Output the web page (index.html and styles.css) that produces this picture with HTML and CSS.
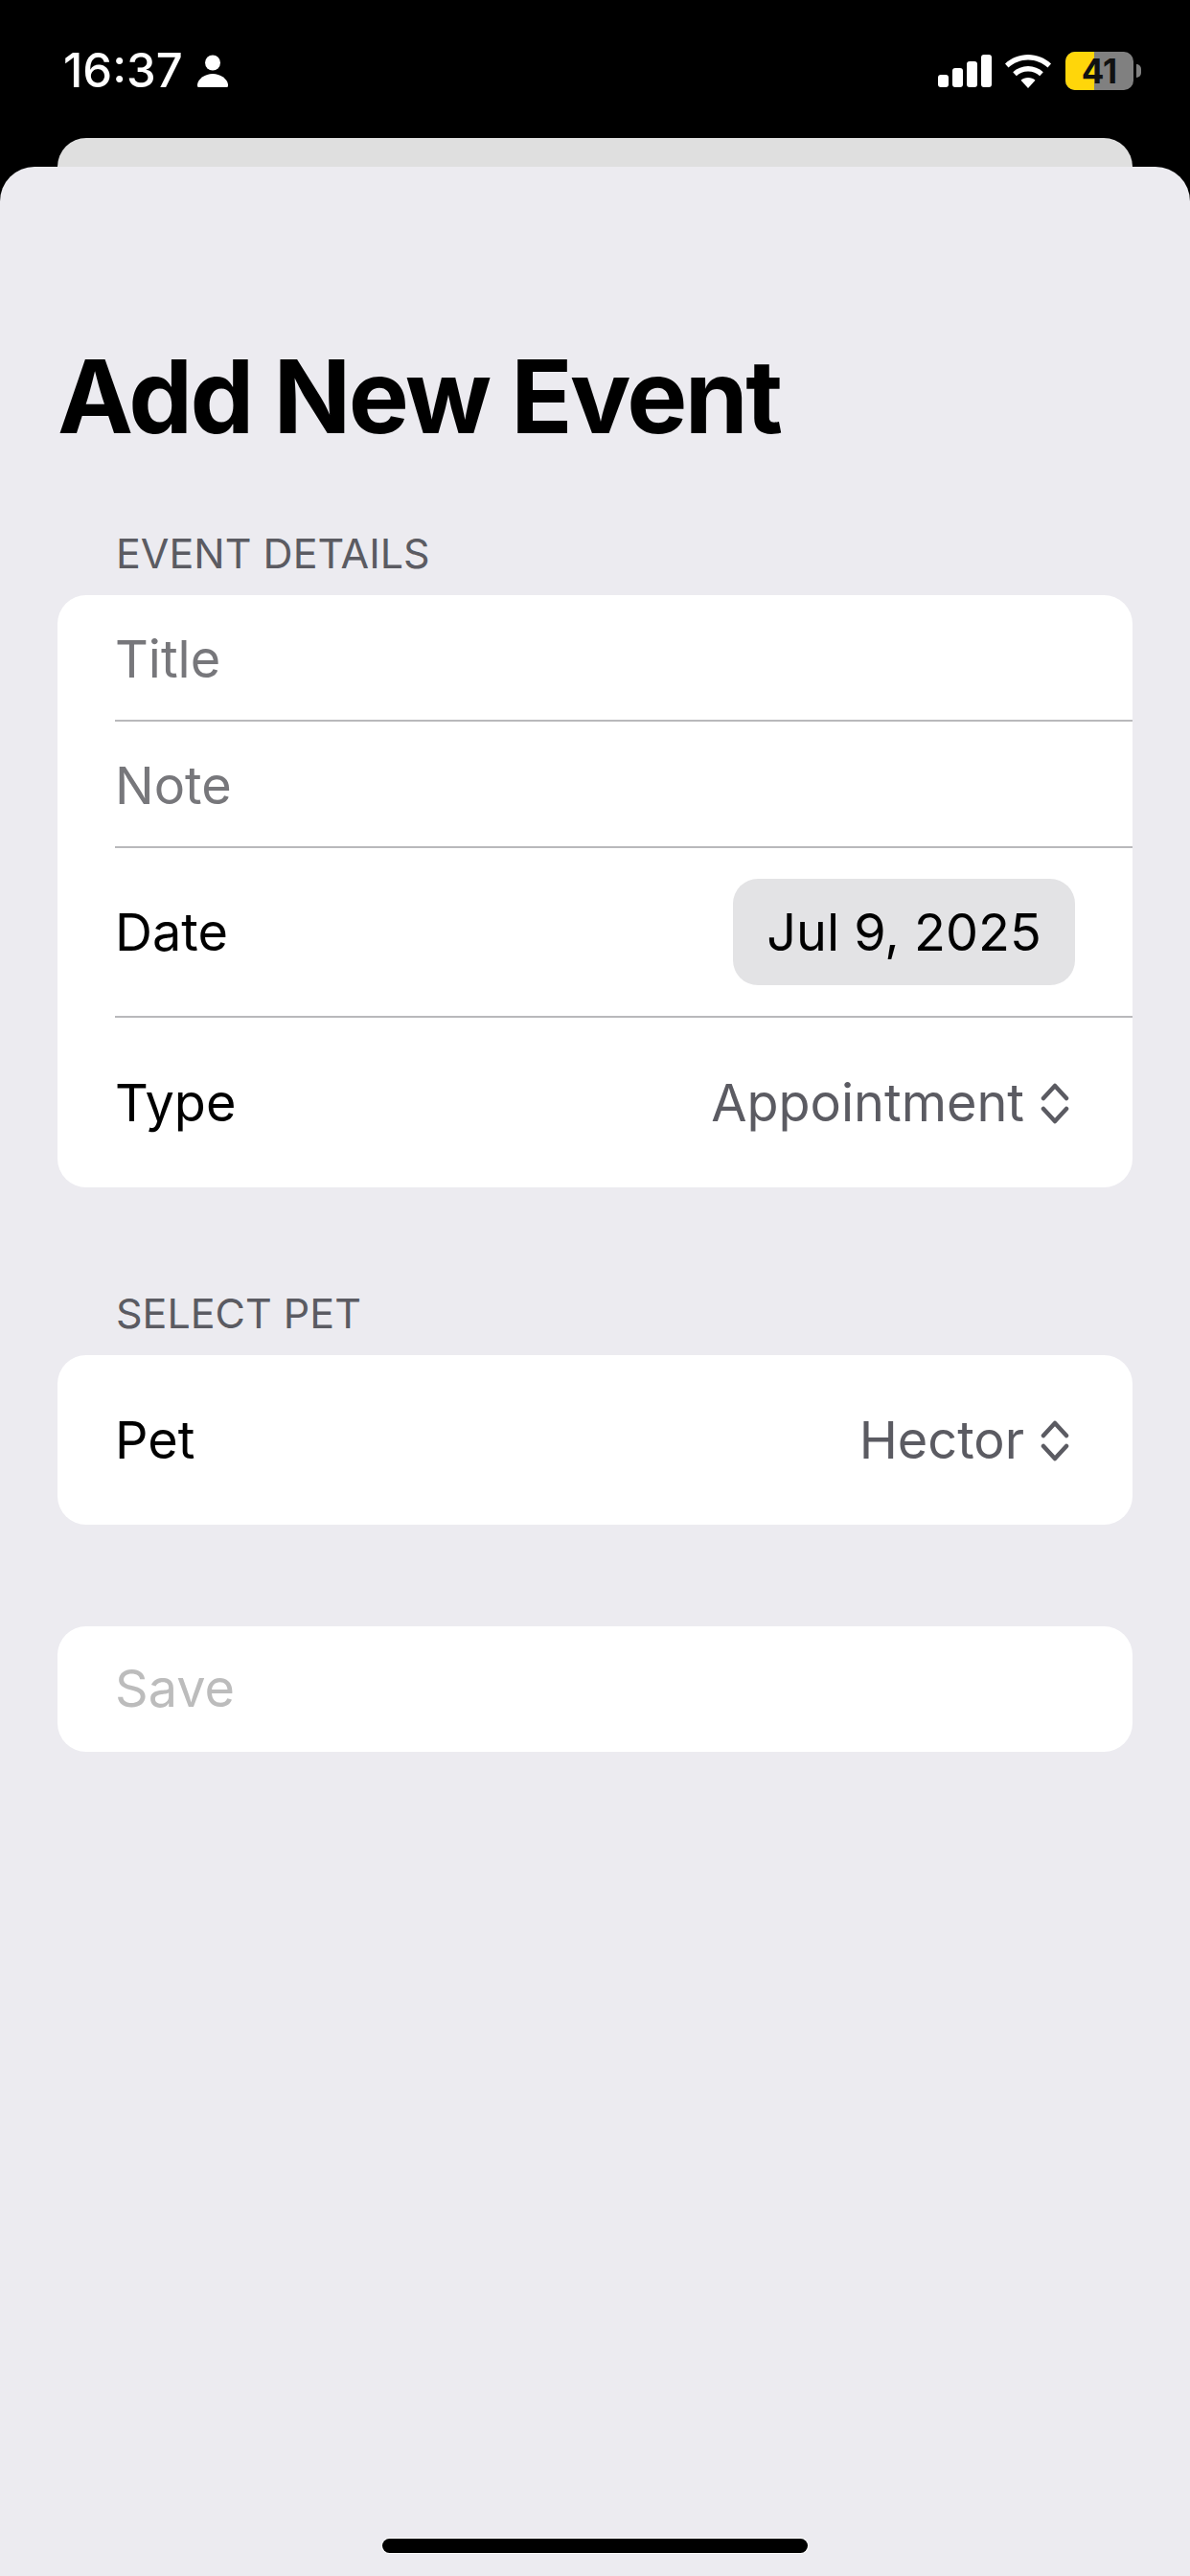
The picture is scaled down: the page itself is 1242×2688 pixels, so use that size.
FILE: index.html
```html
<!DOCTYPE html>
<html lang="en">
<head>
    <meta charset="UTF-8">
    <meta name="viewport" content="width=device-width, initial-scale=1.0">
    <title>Add New Event</title>
    <link rel="stylesheet" href="styles.css">
</head>
<body>
    <div class="status-bar">
        <div class="status-left">
            <span class="time">16:37</span>
            <svg class="person" viewBox="0 0 32 34"><circle cx="16" cy="8.5" r="8"/><path d="M1 34c-1 0-1-1.500-1-3 1-6 8-11 16-11s15 5 16 11c0 1.500 0 3-1 3z"/></svg>
        </div>
        <div class="status-right">
            <svg class="signal" viewBox="0 0 56 34"><rect x="0" y="21" width="11" height="13" rx="3"/><rect x="15" y="14" width="11" height="20" rx="3"/><rect x="30" y="7" width="11" height="27" rx="3"/><rect x="45" y="0" width="11" height="34" rx="3"/></svg>
            <svg class="wifi" viewBox="0 0 48 35"><path d="M24 0c9 0 17.500 3.500 24 9.500l-3.500 4C39 8.500 32 5.500 24 5.500S9 8.500 3.500 13.500L0 9.500C6.500 3.500 15 0 24 0z"/><path d="M24 12c6 0 11.500 2.300 15.800 6.200l-3.600 4C33 19.300 28.700 17.500 24 17.500s-9 1.800-12.200 4.700l-3.600-4C12.500 14.300 18 12 24 12z"/><path d="M24 24c3 0 5.500 1 7.500 2.800L24 35l-7.500-8.200C18.500 25 21 24 24 24z"/></svg>
            <div class="battery">
                <div class="battery-body">
                    <div class="battery-fill"></div>
                    <span class="battery-num">41</span>
                </div>
                <div class="battery-cap"></div>
            </div>
        </div>
    </div>

    <div class="back-sheet"></div>

    <div class="sheet">
        <h1>Add New Event</h1>

        <div class="section-label">EVENT DETAILS</div>
        <div class="card">
            <div class="row row-input"><span class="placeholder">Title</span></div>
            <div class="row row-input"><span class="placeholder">Note</span></div>
            <div class="row row-tall">
                <span>Date</span>
                <span class="date-pill">Jul 9, 2025</span>
            </div>
            <div class="row row-tall">
                <span>Type</span>
                <span class="picker">Appointment
                    <svg class="chevrons" viewBox="0 0 30 44"><path d="M3 17 15 4l12 13M3 28l12 13 12-13"/></svg>
                </span>
            </div>
        </div>

        <div class="section-label second">SELECT PET</div>
        <div class="card">
            <div class="row row-tall">
                <span>Pet</span>
                <span class="picker">Hector
                    <svg class="chevrons" viewBox="0 0 30 44"><path d="M3 17 15 4l12 13M3 28l12 13 12-13"/></svg>
                </span>
            </div>
        </div>

        <div class="card save-card">
            <div class="row row-save"><span class="save">Save</span></div>
        </div>

        <div class="home-indicator"></div>
    </div>
</body>
</html>
```

FILE: styles.css
```css
* { box-sizing: border-box; }
html, body { margin: 0; padding: 0; }
body { width: 1242px; height: 2688px; background: #000; font-family: Inter, "Liberation Sans", sans-serif; color: #000; overflow: hidden; }

.status-bar { height: 144px; padding: 54px 51px 0 66px; display: flex; justify-content: space-between; align-items: flex-start; }
.status-left { display: flex; align-items: center; gap: 15px; height: 40px; }
.time { color: #fff; font-size: 49px; font-weight: 500; line-height: 44px; }
.person { width: 32px; height: 34px; fill: #fff; }
.status-right { display: flex; align-items: center; height: 40px; }
.signal { width: 56px; height: 34px; fill: #fff; margin-right: 14px; }
.wifi { width: 48px; height: 35px; fill: #fff; margin-right: 15px; }
.battery { display: flex; align-items: center; }
.battery-body { position: relative; width: 71px; height: 40px; border-radius: 10px; background: #808080; overflow: hidden; display: flex; align-items: center; justify-content: center; }
.battery-fill { position: absolute; left: 0; top: 0; bottom: 0; width: 30px; background: #ffd60a; }
.battery-num { position: relative; font-size: 35px; font-weight: 700; color: #111; line-height: 40px; }
.battery-cap { width: 5px; height: 14px; margin-left: 3px; background: #808080; border-radius: 0 5px 5px 0; }

.back-sheet { height: 30px; margin: 0 60px; background: #dfdfdf; border-radius: 30px 30px 0 0; }

.sheet { height: 2514px; background: #ecebf0; border-radius: 36px 36px 0 0; padding: 0 60px; position: relative; }
h1 { margin: 0; padding-top: 176px; font-size: 106px; line-height: 128px; font-weight: 700; letter-spacing: -2.500px; height: 304px; }

.section-label { margin-left: 61px; font-size: 43px; line-height: 50px; color: #5b5b62; height: 143px; padding-top: 74px; }
.section-label.second { height: 175px; padding-top: 106px; }

.card { background: #fff; border-radius: 30px; padding-left: 60px; font-size: 54px; }
.row { display: flex; justify-content: space-between; align-items: center; padding-right: 60px; border-bottom: 2px solid #b9b9bb; }
.row:last-child { border-bottom: none; }
.row-input { height: 132px; padding-top: 3px; }
.row-tall { height: 177px; }
.row-save { height: 131px; padding-bottom: 3px; }
.placeholder { color: #77777b; }
.date-pill { display: block; width: 357px; height: 111px; line-height: 111px; text-align: center; background: #e3e3e5; border-radius: 26px; }
.picker { display: flex; align-items: center; gap: 17px; margin-right: 6px; color: #5b5b62; }
.chevrons { width: 30px; height: 44px; fill: none; stroke: #5b5b62; stroke-width: 4.500px; stroke-linecap: round; stroke-linejoin: round; }
.save-card { margin-top: 106px; }
.save { color: #bcbcbc; }

.home-indicator { position: absolute; left: 399px; bottom: 24px; width: 444px; height: 15px; border-radius: 8px; background: #000; box-shadow: 0 0 0 1px #fff; }
```
